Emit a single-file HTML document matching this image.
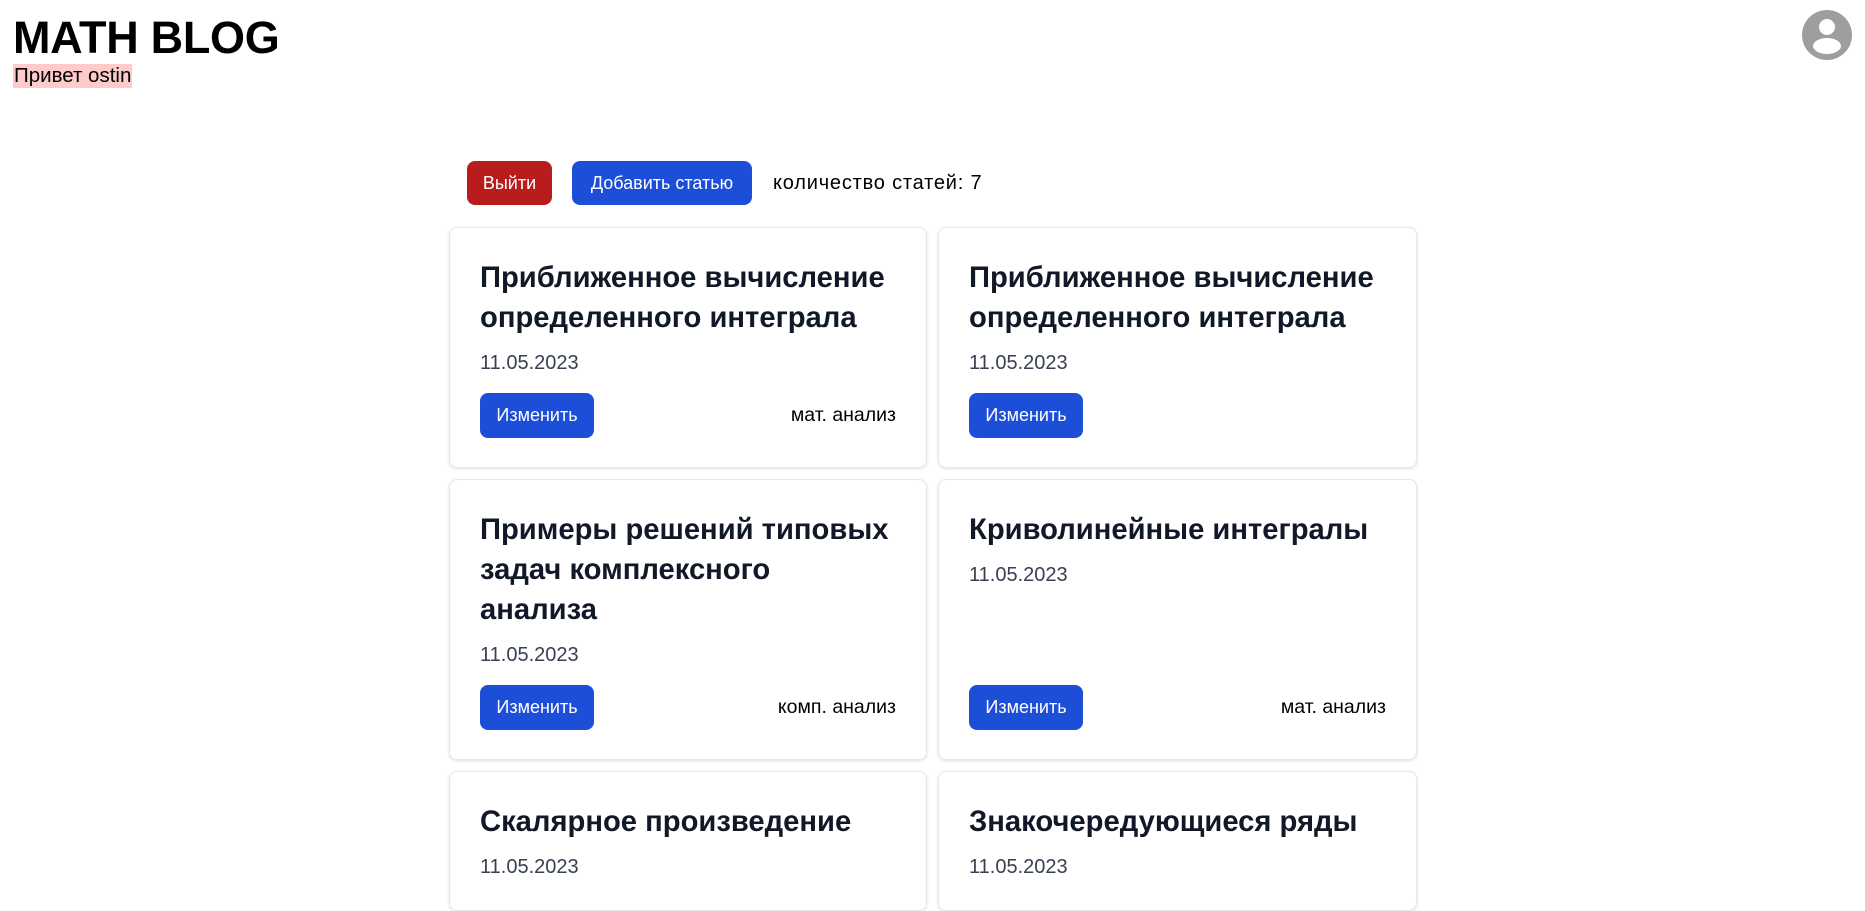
<!DOCTYPE html>
<html><head><meta charset="utf-8"><style>
*{box-sizing:border-box;margin:0;padding:0}
body{width:1865px;height:826px;overflow:hidden;background:#fff;font-family:"Liberation Sans",Arial,sans-serif;position:relative;color:#000}
h1{position:absolute;left:13px;top:12px;font-size:45px;font-weight:bold;letter-spacing:-0.3px}
.hi{position:absolute;left:13px;top:64px;height:24px;line-height:24px;font-size:20.5px;background:#fecaca;padding:0 1px}
.av{position:absolute;left:1802px;top:10px}
.bar{position:absolute;left:467px;top:161px;display:flex;align-items:center}
.btn{height:44px;border-radius:8px;color:#fff;font-size:18px;display:inline-flex;align-items:center;justify-content:center;font-weight:500}
.red{background:#b91c1c;width:85px}
.blue{background:#1d4ed8}
.add{width:180px;margin-left:20px}
.cnt{margin-left:21px;font-size:20px;letter-spacing:0.8px}
.grid{position:absolute;left:449px;top:227px;width:968px;display:grid;grid-template-columns:478px 479px;column-gap:11px;row-gap:11px}
.card{border:1px solid #e5e7eb;border-radius:8px;box-shadow:0 1px 3px rgba(0,0,0,.12);padding:30px 30px 29px;display:flex;flex-direction:column}
.t{font-size:29.2px;line-height:40px;font-weight:bold;color:#111827;white-space:nowrap}
.d{font-size:20px;line-height:28px;color:#374151;margin-top:11px}
.f{margin-top:auto;padding-top:16px;display:flex;justify-content:space-between;align-items:center}
.ed{width:114px;height:45px}
.tag{font-size:19.5px}
</style></head><body>
<h1>MATH BLOG</h1>
<div class="hi">Привет ostin</div>
<svg class="av" width="50" height="50" viewBox="0 0 50 50"><circle cx="25" cy="25" r="25" fill="#9e9e9e"/><circle cx="25" cy="17" r="8" fill="#fff"/><ellipse cx="25" cy="36" rx="14" ry="8" fill="#fff"/></svg>
<div class="bar"><span class="btn red">Выйти</span><span class="btn blue add">Добавить статью</span><span class="cnt">количество статей: 7</span></div>
<div class="grid">
<div class="card"><div class="t">Приближенное вычисление<br>определенного интеграла</div><div class="d">11.05.2023</div><div class="f"><span class="btn blue ed">Изменить</span><span class="tag">мат. анализ</span></div></div>
<div class="card"><div class="t">Приближенное вычисление<br>определенного интеграла</div><div class="d">11.05.2023</div><div class="f"><span class="btn blue ed">Изменить</span><span class="tag"></span></div></div>
<div class="card"><div class="t">Примеры решений типовых<br>задач комплексного<br>анализа</div><div class="d">11.05.2023</div><div class="f"><span class="btn blue ed">Изменить</span><span class="tag">комп. анализ</span></div></div>
<div class="card"><div class="t">Криволинейные интегралы</div><div class="d">11.05.2023</div><div class="f"><span class="btn blue ed">Изменить</span><span class="tag">мат. анализ</span></div></div>
<div class="card"><div class="t">Скалярное произведение</div><div class="d">11.05.2023</div></div>
<div class="card"><div class="t">Знакочередующиеся ряды</div><div class="d">11.05.2023</div></div>
</div>
</body></html>
